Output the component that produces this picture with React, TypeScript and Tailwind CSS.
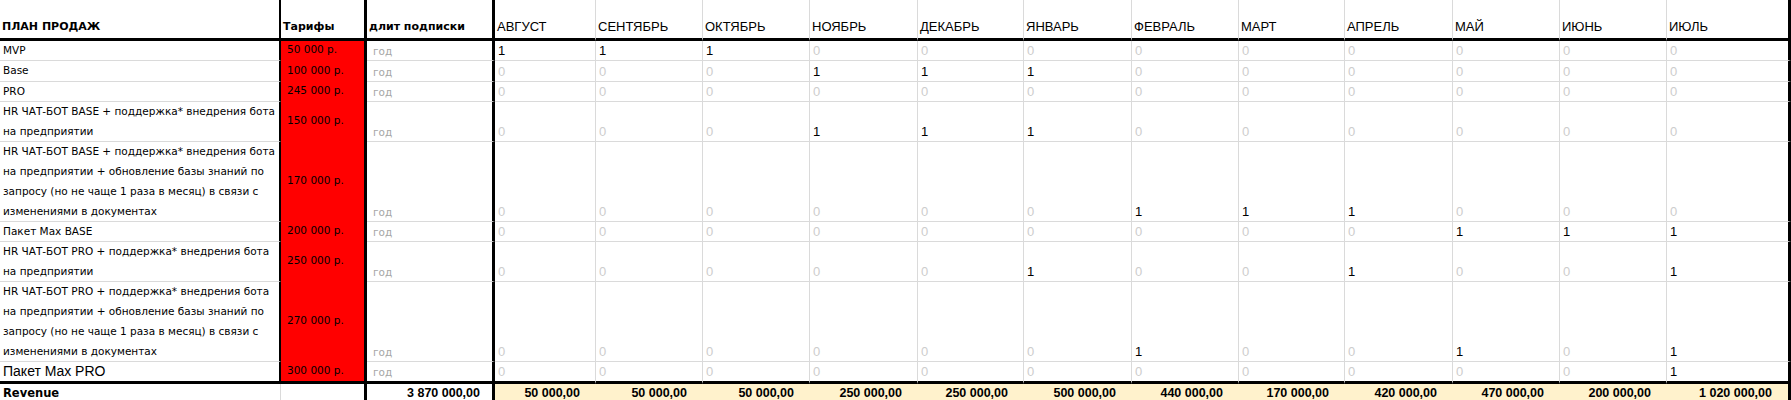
const COLS =
  'grid grid-cols-[281px_86px_128px_101px_107px_107px_108px_106px_108px_107px_106px_108px_107px_107px_124px]';

const MONTHS = [
  'АВГУСТ',
  'СЕНТЯБРЬ',
  'ОКТЯБРЬ',
  'НОЯБРЬ',
  'ДЕКАБРЬ',
  'ЯНВАРЬ',
  'ФЕВРАЛЬ',
  'МАРТ',
  'АПРЕЛЬ',
  'МАЙ',
  'ИЮНЬ',
  'ИЮЛЬ',
];

const LONG_BASE = [
  'HR ЧАТ-БОТ BASE + поддержка* внедрения бота',
  'на предприятии + обновление базы знаний по',
  'запросу (но не чаще 1 раза в месяц) в связи с',
  'изменениями в документах',
];
const LONG_PRO = [
  'HR ЧАТ-БОТ PRO + поддержка* внедрения бота',
  'на предприятии + обновление базы знаний по',
  'запросу (но не чаще 1 раза в месяц) в связи с',
  'изменениями в документах',
];

type Row = { name: string[]; price: string; h: string; vals: number[]; big?: boolean; last?: boolean };

const ROWS: Row[] = [
  { name: ['MVP'], price: '50 000 р.', h: 'h-[20px]', vals: [1, 1, 1, 0, 0, 0, 0, 0, 0, 0, 0, 0] },
  { name: ['Base'], price: '100 000 р.', h: 'h-[21px]', vals: [0, 0, 0, 1, 1, 1, 0, 0, 0, 0, 0, 0] },
  { name: ['PRO'], price: '245 000 р.', h: 'h-[20px]', vals: [0, 0, 0, 0, 0, 0, 0, 0, 0, 0, 0, 0] },
  {
    name: ['HR ЧАТ-БОТ BASE + поддержка* внедрения бота', 'на предприятии'],
    price: '150 000 р.',
    h: 'h-[40px]',
    vals: [0, 0, 0, 1, 1, 1, 0, 0, 0, 0, 0, 0],
  },
  { name: LONG_BASE, price: '170 000 р.', h: 'h-[80px]', vals: [0, 0, 0, 0, 0, 0, 1, 1, 1, 0, 0, 0] },
  { name: ['Пакет Max BASE'], price: '200 000 р.', h: 'h-[20px]', vals: [0, 0, 0, 0, 0, 0, 0, 0, 0, 1, 1, 1] },
  {
    name: ['HR ЧАТ-БОТ PRO + поддержка* внедрения бота', 'на предприятии'],
    price: '250 000 р.',
    h: 'h-[40px]',
    vals: [0, 0, 0, 0, 0, 1, 0, 0, 1, 0, 0, 1],
  },
  { name: LONG_PRO, price: '270 000 р.', h: 'h-[80px]', vals: [0, 0, 0, 0, 0, 0, 1, 0, 0, 1, 0, 1] },
  {
    name: ['Пакет Max PRO'],
    price: '300 000 р.',
    h: 'h-[22px]',
    vals: [0, 0, 0, 0, 0, 0, 0, 0, 0, 0, 0, 1],
    big: true,
    last: true,
  },
];

const REVENUE = [
  '50 000,00',
  '50 000,00',
  '50 000,00',
  '250 000,00',
  '250 000,00',
  '500 000,00',
  '440 000,00',
  '170 000,00',
  '420 000,00',
  '470 000,00',
  '200 000,00',
  '1 020 000,00',
];

const tahoma = "font-['DejaVu_Sans',sans-serif]";
const arial = "font-['Liberation_Sans',Arial,sans-serif]";

function BodyRow({ row }: { row: Row }) {
  const bottom = row.last ? 'border-b-[3px] border-b-black' : 'border-b border-b-[#dadada]';
  return (
    <div className={`${COLS} ${row.h}`}>
      <div className={`${bottom} border-r-2 border-r-black pl-[3px] overflow-hidden whitespace-nowrap`}>
        {row.big ? (
          <div className={`${arial} text-[14px] leading-[19px] text-black`}>{row.name[0]}</div>
        ) : (
          row.name.map((l, i) => (
            <div key={i} className={`${tahoma} text-[10.5px] leading-[20px] -mt-[1px] mb-[1px] text-black`}>
              {l}
            </div>
          ))
        )}
      </div>
      <div
        className={`bg-[#ff0000] border-r-[3px] border-r-black ${
          row.last ? 'border-b-[3px] border-b-black' : ''
        } flex items-center pl-[6px] pb-[2px] ${tahoma} text-[10.5px] text-black whitespace-nowrap`}
      >
        {row.price}
      </div>
      <div
        className={`${bottom} border-r-[3px] border-r-black flex items-end pl-[6px] pb-[1px] ${tahoma} text-[10.5px] leading-[16px] text-[#a6a6a6]`}
      >
        год
      </div>
      {row.vals.map((v, i) => (
        <div
          key={i}
          className={`${bottom} ${
            i === 11 ? 'border-r-[3px] border-r-black' : 'border-r border-r-[#dadada]'
          } flex items-end pl-[3px] pb-[1px] ${arial} text-[13px] leading-[16px] ${
            v ? 'text-black' : 'text-[#cdcdcd]'
          }`}
        >
          {v}
        </div>
      ))}
    </div>
  );
}

export default function App() {
  return (
    <div className="w-[1791px] h-[400px] overflow-hidden bg-white">
      <div className={`${COLS} h-[41px]`}>
        <div
          className={`border-b-[3px] border-b-black border-r-2 border-r-black flex items-end pl-[2px] pb-[3px] ${tahoma} font-bold text-[11px] text-black whitespace-nowrap`}
        >
          ПЛАН ПРОДАЖ
        </div>
        <div
          className={`border-b-[3px] border-b-black border-r-[3px] border-r-black flex items-end pl-[2px] pb-[3px] ${tahoma} font-bold text-[11px] text-black`}
        >
          Тарифы
        </div>
        <div
          className={`border-b-[3px] border-b-black border-r-[3px] border-r-black flex items-end pl-[2px] pb-[3px] ${tahoma} font-bold text-[11px] text-black whitespace-nowrap`}
        >
          длит подписки
        </div>
        {MONTHS.map((m, i) => (
          <div
            key={m}
            className={`border-b-[3px] border-b-black ${
              i === 11 ? 'border-r-[3px] border-r-black' : 'border-r border-r-[#dadada]'
            } flex items-end pl-[2px] pb-[3px] ${arial} text-[13px] leading-[16px] text-black`}
          >
            {m}
          </div>
        ))}
      </div>
      {ROWS.map((r, i) => (
        <BodyRow key={i} row={r} />
      ))}
      <div className={`${COLS} h-[16px]`}>
        <div
          className={`border-r border-r-[#dadada] flex items-center pl-[3px] ${tahoma} font-bold text-[11.5px] text-black`}
        >
          Revenue
        </div>
        <div className="border-r-[3px] border-r-black" />
        <div
          className={`border-r-[3px] border-r-black flex items-center justify-end pr-[12px] ${arial} font-bold text-[12.5px] text-black`}
        >
          3 870 000,00
        </div>
        {REVENUE.map((v, i) => (
          <div
            key={i}
            className={`bg-[#fff2cc] ${
              i === 11 ? 'border-r-[3px] border-r-black' : ''
            } flex items-center justify-end pr-[16px] ${arial} font-bold text-[12.5px] text-black whitespace-nowrap`}
          >
            {v}
          </div>
        ))}
      </div>
    </div>
  );
}
